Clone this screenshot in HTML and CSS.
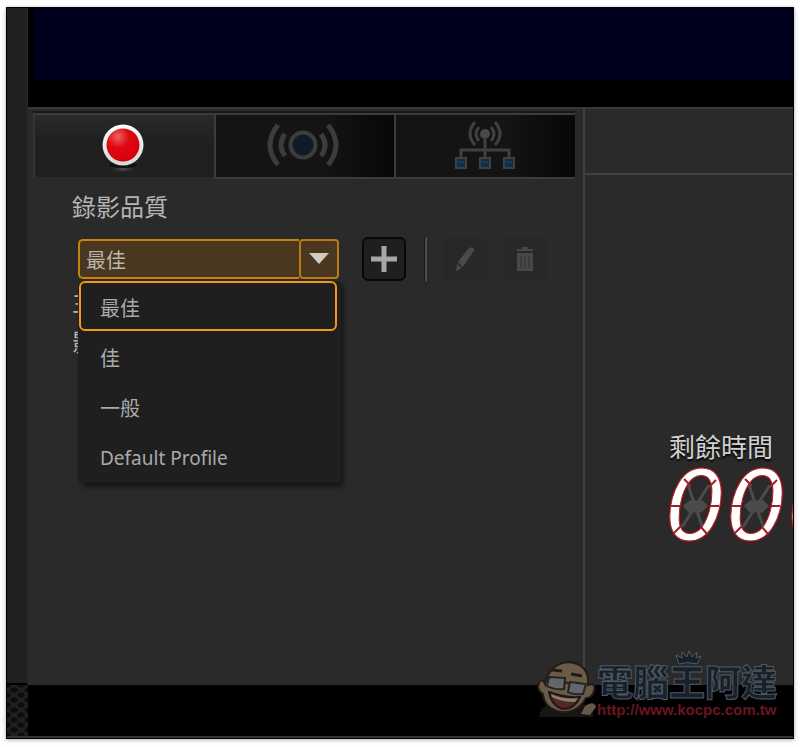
FILE: index.html
```html
<!DOCTYPE html>
<html lang="zh-Hant">
<head>
<meta charset="utf-8">
<meta name="viewport" content="width=device-width, initial-scale=1">
<title>錄影品質</title>
<link rel="stylesheet" href="styles.css">
</head>
<body>
<div class="app">
  <div class="workspace">
    <div class="rail"></div>
    <main class="main">
      <div class="preview"><div class="screen"></div></div>
      <div class="panels">
        <section class="settings">
          <div class="tabs" role="tablist">
            <button class="tab active" type="button" role="tab" aria-selected="true" aria-label="錄影">
              <svg width="50" height="56" viewBox="0 0 50 56">
                <defs>
                  <radialGradient id="red" cx=".35" cy=".25" r=".75"><stop offset="0" stop-color="#ee6262"/><stop offset=".45" stop-color="#de0812"/><stop offset="1" stop-color="#d90009"/></radialGradient>
                  <linearGradient id="rim" x2="0" y2="1"><stop offset="0" stop-color="#fff"/><stop offset="1" stop-color="#cfdad8"/></linearGradient>
                  <radialGradient id="glow"><stop offset="0" stop-color="#555"/><stop offset="1" stop-color="#222" stop-opacity="0"/></radialGradient>
                </defs>
                <ellipse cx="24" cy="51" rx="15" ry="4" fill="url(#glow)"/>
                <ellipse cx="24" cy="47" rx="14" ry="3" fill="#111"/>
                <circle cx="24" cy="27" r="20.500" fill="url(#rim)"/>
                <circle cx="24" cy="27" r="16.500" fill="url(#red)"/>
              </svg>
            </button>
            <button class="tab" type="button" role="tab" aria-selected="false" aria-label="串流">
              <svg width="80" height="50" viewBox="0 0 80 50" fill="none" stroke="#3c3c3c" stroke-width="5">
                <circle cx="38" cy="24" r="12.500" fill="#111a28" stroke-width="4"/>
                <path d="M20 13Q12 24 20 35M56 13Q64 24 56 35M13 4Q-3 24 13 44M63 4Q79 24 63 44"/>
              </svg>
            </button>
            <button class="tab" type="button" role="tab" aria-selected="false" aria-label="網路串流">
              <svg width="66" height="54" viewBox="0 0 66 54" fill="none" stroke="#404040" stroke-width="3">
                <circle cx="32" cy="15" r="5" fill="#484848" stroke="none"/>
                <path d="M26 8Q20 15 26 22M38 8Q44 15 38 22M22 3Q12 15 22 26M42 3Q52 15 42 26M32 20V40M8 40V31H56V40"/>
                <g fill="#0e2c4b" stroke="#404040" stroke-width="2"><path d="M3 39h10v10H3zM27 39h10v10H27zM51 39h10v10H51z"/></g>
                <path d="M5 43h6M29 43h6M53 43h6" stroke="#17404e" stroke-width="2"/>
              </svg>
            </button>
          </div>
          <div class="form">
            <label class="field-label" for="quality">錄影品質</label>
            <div class="toolbar">
              <div class="combo">
                <select id="quality" class="combo-value">
                  <option>最佳</option><option>佳</option><option>一般</option><option>Default Profile</option>
                </select>
                <button class="combo-arrow" type="button" aria-label="開啟選單" aria-expanded="true">
                  <svg width="22" height="14" viewBox="0 0 22 14"><path d="M1 1H21L11 12Z" fill="#d0ccc4"/></svg>
                </button>
                <ul class="menu" role="listbox" aria-label="錄影品質">
                  <li class="option selected" role="option" aria-selected="true">最佳</li>
                  <li class="option" role="option" aria-selected="false">佳</li>
                  <li class="option" role="option" aria-selected="false">一般</li>
                  <li class="option latin" role="option" aria-selected="false">Default Profile</li>
                </ul>
              </div>
              <button class="tool add" type="button" aria-label="新增">
                <svg width="26" height="26" viewBox="0 0 26 26"><path d="M13 0V26M0 13H26" stroke="#a5a5aa" stroke-width="5"/></svg>
              </button>
              <span class="divider"></span>
              <button class="tool" type="button" disabled aria-label="編輯">
                <svg width="28" height="28" viewBox="0 0 28 28" fill="#4a4a4a"><path d="M5 26 6 19 11 23ZM7 17 17 4Q20 1 22 3 24 4 22 7L12 22Z"/></svg>
              </button>
              <button class="tool" type="button" disabled aria-label="刪除">
                <svg width="20" height="26" viewBox="0 0 20 26"><path d="M7 3V1H13V3H18V5H2V3ZM2 7H18V25H2Z" fill="#484848"/><path d="M6 10V22M10 10V22M14 10V22" stroke="#3c3c3c" stroke-width="2"/></svg>
              </button>
            </div>
            <div class="info">
              <p>主</p>
              <p>影</p>
            </div>
          </div>
        </section>
        <section class="status">
          <div class="status-head"></div>
          <div class="timer">
            <div class="timer-label">剩餘時間</div>
            <div class="digits">
              <svg class="segments" width="183" height="76" viewBox="0 0 183 76" stroke="#4b4b4b" stroke-width="3" fill="#4b4b4b">
                <path d="M23 16 37 57M44 16 17 58M84 16 98 57M105 16 78 58"/>
                <path d="M20 37 25 33H37L41 37 36 42H24ZM81 37 86 33H98L102 37 97 42H85Z"/>
              </svg>
              <span class="count">000</span>
              <svg class="segments" width="183" height="76" viewBox="0 0 183 76" fill="none" stroke="#9c2228" stroke-width="2">
                <path d="M6 37H16M45 37H54M19 10 26 17M51 11 44 18M9 64 16 57M42 65 36 58"/>
                <path d="M67 37H77M106 37H115M80 10 87 17M112 11 105 18M70 64 77 57M103 65 97 58"/>
              </svg>
            </div>
          </div>
        </section>
      </div>
    </main>
  </div>
  <footer class="footer"><div class="mesh"></div><div class="base"></div></footer>
  <a class="brand" href="http://www.kocpc.com.tw">
    <svg class="face" width="60" height="60" viewBox="0 0 60 60">
      <path d="M2 59Q3 48 13 47L46 46Q58 49 56 59Z" fill="#171513"/>
      <path d="M44 56 48 48Q57 42 59 49L53 57Z" fill="#655948"/>
      <path d="M8 26Q12 6 31 4Q53 6 51 27Q59 24 57 33Q55 40 49 40Q41 55 24 54Q7 50 6 36Q-2 31 3 23Q6 21 8 26Z" fill="#6a5b49" stroke="#231b16" stroke-width="2"/>
      <path d="M15 12 25 13M34 16 45 18" stroke="#211b17" stroke-width="3"/>
      <path d="M12 19 28 20 27 31Q17 32 10 28ZM33 24 49 26 46 36Q36 37 31 34Z" fill="#63666a" stroke="#252322" stroke-width="2"/>
      <path d="M28 24 33 26M8 19 12 21" stroke="#252322" stroke-width="2"/>
      <path d="M12 34Q28 40 43 39Q37 52 25 51Q14 47 12 34Z" fill="#542620" stroke="#211715" stroke-width="2"/>
      <path d="M14 36Q28 42 41 40L38 44Q24 44 15 39Z" fill="#85817a"/>
    </svg>
    <span class="brand-text">
      <svg class="crown" width="28" height="16" viewBox="0 0 28 16"><path d="M5 14 2 5 8 8 8 2 13 7 15 1 18 7 23 2 22 8 27 6 23 14Q14 11 5 14Z" fill="#17202a" stroke="#505963"/></svg>
      <span class="brand-name">電腦王阿達</span>
      <span class="brand-url">http://www.kocpc.com.tw</span>
    </span>
  </a>
</div>
</body>
</html>
```
FILE: styles.css
```css
* { box-sizing: border-box; }

body {
  margin: 0;
  min-height: 100vh;
  padding: 7px 6px 8px;
  display: flex;
  background: #fff;
  color: #b5b5b5;
  font-family: "Noto Sans CJK TC", "Noto Sans", sans-serif;
  font-size: 20px;
}

button, select { font: inherit; color: inherit; margin: 0; }
button { display: grid; place-items: center; padding: 0; border: 0; background: none; }
svg { display: block; }
ul, p { margin: 0; padding: 0; }

.app {
  position: relative;
  flex: 1;
  min-width: 0;
  display: flex;
  flex-direction: column;
  overflow: hidden;
  border: 1px solid #000;
  background: #000;
  box-shadow: 0 1px 4px #aaa;
}

.workspace { flex: 1; display: grid; grid-template-columns: 21px minmax(0, 1fr); }
.rail { background: #202020; border-right: 1px solid #292929; border-bottom: 2px solid #000; }
.main { display: flex; flex-direction: column; }
.preview { padding: 0 0 27px 6px; }
.screen { height: 72px; background: #00001e; }

.panels {
  flex: 1;
  display: grid;
  grid-template-columns: minmax(0, 557fr) minmax(0, 208fr);
  border-top: 2px solid #383838;
  background: #2a2a2a;
}

.settings { border-right: 2px solid #424242; padding: 4px 8px 0 5px; }
.tabs { display: grid; grid-template-columns: repeat(3, 1fr); border-top: 2px solid #3c3c3c; box-shadow: 0 -2px #181818; }
.tab {
  height: 64px;
  border-left: 2px solid #3c3c3c;
  border-bottom: 2px solid #3c3c3c;
  background: linear-gradient(90deg, #141414 60%, #070707);
}
.tab.active { border-left-color: #363636; border-bottom-color: #2a2a2a; background: linear-gradient(#2a2a2a, #202020 40%); }

.form { padding: 10px 0 0 39px; }
.field-label { display: block; font-size: 24px; line-height: 34px; }
.toolbar { display: flex; align-items: center; margin: 14px 0 0 6px; }

.combo { position: relative; display: flex; width: 261px; height: 40px; margin-right: 23px; color: #b9b6b0; }
.combo-value {
  flex: 1;
  min-width: 0;
  appearance: none;
  padding: 0 6px;
  border: 2px solid #c78211;
  border-right: 0;
  border-radius: 5px 0 0 5px;
  background: #49381f;
  outline: 0;
}
.combo-arrow { width: 40px; border: 2px solid #b97a16; border-radius: 4px; background: #49381f; }

.menu {
  position: absolute;
  z-index: 2;
  top: 42px;
  left: 0;
  width: 263px;
  padding-bottom: 2px;
  list-style: none;
  border-radius: 5px;
  background: #1f1f1f;
  box-shadow: 3px 4px 4px #171717;
}
.option { height: 50px; padding: 0 20px; border: 2px solid transparent; line-height: 50px; color: #aaa; }
.option.latin { font-family: "Noto Sans", sans-serif; font-size: 19px; }
.option.selected { margin: 0 4px 0 1px; padding: 0 19px; border-color: #f39812; border-radius: 6px; }

.tool { width: 44px; height: 44px; border-radius: 6px; background: #282828; }
.tool.add { border: 2px solid #080808; background: #1f1f1f; }
.divider { width: 3px; height: 44px; margin: 0 16px 0 18px; border-left: 1px solid #181818; border-right: 2px solid #4c4c4c; }
.tool + .tool { margin-left: 16px; }

.info { font-size: 24px; line-height: 40px; }

.status-head { height: 66px; border-bottom: 2px solid #424242; }
.timer { padding: 254px 0 0 80px; }
.timer-label { padding-left: 4px; font-size: 26px; line-height: 34px; color: #d0d0d0; text-shadow: 0 2px 2px #000; white-space: nowrap; }
.digits { position: relative; height: 88px; }
.segments { position: absolute; top: 6px; left: 0; }
.count {
  position: relative;
  display: block;
  font: oblique 96px/88px "DejaVu Sans", sans-serif;
  color: #fff;
  -webkit-text-stroke: 1px #b32127;
  text-shadow: 0 0 3px #8d0d12;
}

.footer { display: grid; grid-template-columns: 21px 1fr; height: 53px; border-bottom: 2px solid #333; }
.mesh {
  background-color: #202020;
  background-image: radial-gradient(#0d0d0d 30%, transparent 45%), radial-gradient(#0d0d0d 30%, transparent 45%);
  background-size: 14px 10px;
  background-position: 0 0, 7px 5px;
}

.brand { position: absolute; right: 16px; bottom: 20px; display: flex; align-items: flex-end; text-decoration: none; }
.brand-text { position: relative; display: flex; flex-direction: column; }
.crown { position: absolute; top: -8px; left: 77px; }
.brand-name {
  font: 900 36px/44px "Noto Sans CJK TC", sans-serif;
  color: #17212c;
  -webkit-text-stroke: 1px #505963;
  white-space: nowrap;
}
.brand-url { font: bold 15px/16px "Liberation Sans", sans-serif; color: #6a1520; white-space: nowrap; }
```
